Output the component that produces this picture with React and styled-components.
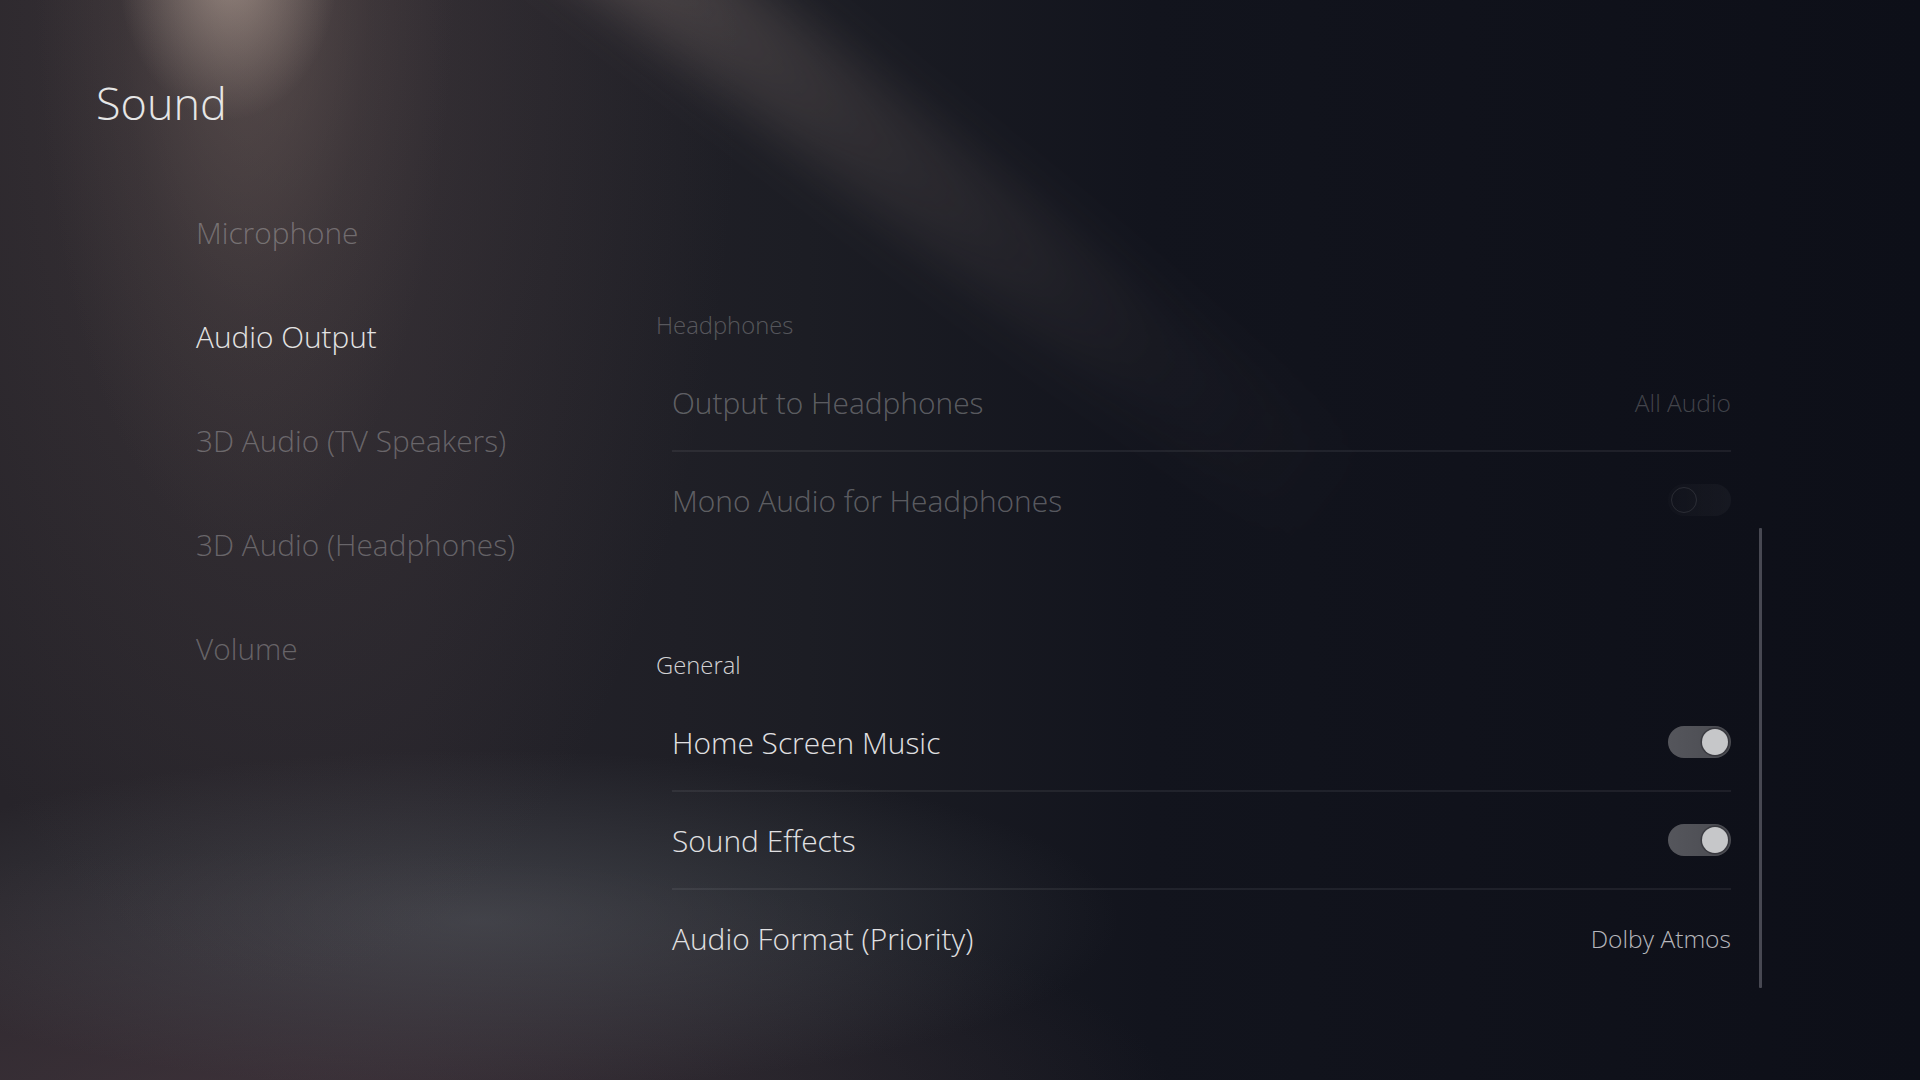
import React from "react";
import styled, { createGlobalStyle, css } from "styled-components";

const GlobalStyle = createGlobalStyle`
  html, body {
    margin: 0;
    padding: 0;
    background: #0e101a;
    overflow: hidden;
  }
  * { box-sizing: border-box; }
`;

const FONT = `"Open Sans", "Noto Sans", "Liberation Sans", sans-serif`;

const Page = styled.div`
  position: relative;
  z-index: 0;
  width: 1920px;
  height: 1080px;
  overflow: hidden;
  padding: 81px 0 0 96px;
  font-family: ${FONT};
  font-weight: 300;
  color: #e8e8e8;
  background:
    radial-gradient(ellipse 110px 150px at 228px -30px, rgba(205, 185, 172, 0.5), transparent 100%),
    radial-gradient(ellipse 210px 600px at 245px -40px, rgba(150, 128, 118, 0.34), rgba(120, 102, 96, 0.12) 60%, transparent 100%),
    radial-gradient(ellipse 460px 950px at 280px 40px, rgba(105, 88, 86, 0.3), transparent 100%),
    radial-gradient(ellipse 640px 170px at 480px 920px, rgba(100, 106, 112, 0.42), transparent 100%),
    radial-gradient(ellipse 900px 260px at 280px 1110px, rgba(80, 62, 70, 0.55), transparent 100%),
    linear-gradient(90deg, #27242a 0%, #25232a 22%, #1c1d24 42%, #12141d 60%, #0d0f18 100%);
`;

const Streak = styled.div`
  position: absolute;
  z-index: -1;
  left: 900px;
  top: -420px;
  width: 105px;
  height: 1250px;
  background: linear-gradient(to bottom, rgba(175, 155, 145, 0.36), rgba(145, 126, 120, 0.18) 40%, rgba(120, 106, 104, 0.06) 70%, transparent 90%);
  transform: rotate(-52deg);
  transform-origin: center center;
  filter: blur(24px);
`;

const Title = styled.h1`
  margin: 0;
  font-size: 45px;
  line-height: 44px;
  font-weight: 300;
  color: #e6e6e6;
`;

const Body = styled.div`
  display: flex;
  margin-top: 55.5px;
`;

const Nav = styled.nav`
  width: 560px;
  padding-left: 100px;
  display: flex;
  flex-direction: column;
`;

const NavItem = styled.div`
  font-size: 29.8px;
  line-height: 104px;
  height: 104px;
  white-space: nowrap;
  color: ${(p) => (p.$active ? "#e4e4e4" : "rgba(255, 255, 255, 0.28)")};
`;

const Content = styled.div`
  display: flex;
  gap: 28px;
  margin-top: 129.5px;
`;

const Sections = styled.div`
  width: 1075px;
  display: flex;
  flex-direction: column;
  gap: 100px;
`;

const Section = styled.section`
  display: flex;
  flex-direction: column;
`;

const SectionHeader = styled.div`
  font-size: 23.8px;
  line-height: 30px;
  height: 30px;
  margin-bottom: 14px;
  color: ${(p) => (p.$dim ? "rgba(255, 255, 255, 0.26)" : "#d2d2d4")};
`;

const Rows = styled.div`
  margin-left: 16px;
  display: flex;
  flex-direction: column;
`;

const Row = styled.div`
  height: 98px;
  display: flex;
  align-items: center;
  justify-content: space-between;
  border-bottom: 2px solid rgba(255, 255, 255, 0.065);
  &:last-child {
    border-bottom-color: transparent;
  }
`;

const Label = styled.span`
  font-size: 29.9px;
  white-space: nowrap;
  color: ${(p) => (p.$dim ? "rgba(255, 255, 255, 0.3)" : "#e0e0e2")};
`;

const Value = styled.span`
  font-size: 24.6px;
  white-space: nowrap;
  color: ${(p) => (p.$dim ? "rgba(255, 255, 255, 0.22)" : "#b6b6bb")};
`;

const Toggle = styled.div`
  width: 63px;
  height: 32px;
  border-radius: 16px;
  display: flex;
  align-items: center;
  padding: 0 3px;
  justify-content: ${(p) => (p.$on ? "flex-end" : "flex-start")};
  ${(p) =>
    p.$on
      ? css`
          background: linear-gradient(90deg, #55565c, #4a4b51);
        `
      : css`
          background: linear-gradient(90deg, rgba(255, 255, 255, 0.01), rgba(255, 255, 255, 0.035));
        `}
`;

const Knob = styled.div`
  width: 26px;
  height: 26px;
  border-radius: 50%;
  ${(p) =>
    p.$on
      ? css`
          background: #c6c7c9;
          box-shadow: 0 0 0 1.5px rgba(20, 20, 26, 0.35);
        `
      : css`
          background: transparent;
          border: 1.5px solid rgba(255, 255, 255, 0.1);
        `}
`;

const ScrollTrack = styled.div`
  width: 3px;
  display: flex;
  flex-direction: column;
  justify-content: flex-end;
`;

const Thumb = styled.div`
  width: 3px;
  height: 460px;
  background: #474852;
  border-radius: 1px;
`;

const navItems = [
  "Microphone",
  "Audio Output",
  "3D Audio (TV Speakers)",
  "3D Audio (Headphones)",
  "Volume",
];

export default function App() {
  return (
    <>
      <GlobalStyle />
      <Page>
        <Streak />
        <Title>Sound</Title>
        <Body>
          <Nav>
            {navItems.map((n) => (
              <NavItem key={n} $active={n === "Audio Output"}>
                {n}
              </NavItem>
            ))}
          </Nav>
          <Content>
            <Sections>
              <Section>
                <SectionHeader $dim>Headphones</SectionHeader>
                <Rows>
                  <Row>
                    <Label $dim>Output to Headphones</Label>
                    <Value $dim>All Audio</Value>
                  </Row>
                  <Row>
                    <Label $dim>Mono Audio for Headphones</Label>
                    <Toggle>
                      <Knob />
                    </Toggle>
                  </Row>
                </Rows>
              </Section>
              <Section>
                <SectionHeader>General</SectionHeader>
                <Rows>
                  <Row>
                    <Label>Home Screen Music</Label>
                    <Toggle $on>
                      <Knob $on />
                    </Toggle>
                  </Row>
                  <Row>
                    <Label>Sound Effects</Label>
                    <Toggle $on>
                      <Knob $on />
                    </Toggle>
                  </Row>
                  <Row>
                    <Label>Audio Format (Priority)</Label>
                    <Value>Dolby Atmos</Value>
                  </Row>
                </Rows>
              </Section>
            </Sections>
            <ScrollTrack>
              <Thumb />
            </ScrollTrack>
          </Content>
        </Body>
      </Page>
    </>
  );
}
